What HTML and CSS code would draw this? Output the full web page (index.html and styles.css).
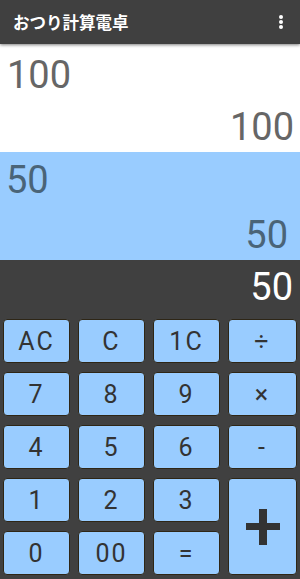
FILE: index.html
```html
<!DOCTYPE html>
<html>
  <head>
    <meta charset="utf-8">
    <link rel="stylesheet" href="styles.css">
  </head>
  <body>
    <div class="appbar">
      <span class="title">おつり計算電卓</span>
      <span class="menu">
        <svg width="6" height="16" viewBox="0 0 6 16">
          <circle cx="3" cy="3" r="2" fill="#fff" />
          <circle cx="3" cy="8" r="2" fill="#fff" />
          <circle cx="3" cy="13" r="2" fill="#fff" />
        </svg>
      </span>
    </div>
    <div class="panel paid">
      <div class="entry">100</div>
      <div class="value">100</div>
    </div>
    <div class="panel price">
      <div class="entry">50</div>
      <div class="value">50</div>
    </div>
    <div class="result">50</div>
    <div class="keypad">
      <button class="key">AC</button>
      <button class="key">C</button>
      <button class="key">1C</button>
      <button class="key">÷</button>
      <button class="key">7</button>
      <button class="key">8</button>
      <button class="key">9</button>
      <button class="key">×</button>
      <button class="key">4</button>
      <button class="key">5</button>
      <button class="key">6</button>
      <button class="key">-</button>
      <button class="key">1</button>
      <button class="key">2</button>
      <button class="key">3</button>
      <button class="key plus">
        <svg width="34" height="36" viewBox="0 0 34 36">
          <rect x="0" y="14" width="34" height="7" fill="#333" />
          <rect x="13" y="0" width="8" height="36" fill="#333" />
        </svg>
      </button>
      <button class="key">0</button>
      <button class="key">00</button>
      <button class="key">=</button>
    </div>
  </body>
</html>
```

FILE: styles.css
```css
html,
body {
  margin: 0;
  padding: 0;
  height: 100%;
  background: #404040;
  font-family: Roboto, "Noto Sans", sans-serif;
}

.appbar {
  display: flex;
  align-items: center;
  justify-content: space-between;
  height: 44px;
  padding: 0 13px;
  background: #404040;
  box-shadow: 0 1px 3px rgba(0, 0, 0, 0.5);
  position: relative;
  z-index: 1;
}

.title {
  color: #fff;
  font-size: 16.5px;
  font-weight: bold;
  font-family: "Noto Sans CJK JP", sans-serif;
}

.menu {
  display: flex;
  margin-right: 3px;
}

.panel {
  display: flex;
  flex-direction: column;
  justify-content: space-between;
  height: 108px;
  box-sizing: border-box;
  font-size: 38px;
  line-height: 1;
}

.paid {
  background: #fff;
  color: #666;
  padding: 12px 6px 6px 7px;
}

.price {
  background: #99ccff;
  color: #4a6478;
  padding: 9px 12px 6px 6px;
}

.entry {
  text-align: left;
}

.value {
  text-align: right;
}

.result {
  height: 52px;
  box-sizing: border-box;
  padding: 8px 7px 0 0;
  text-align: right;
  color: #fff;
  font-size: 38px;
  line-height: 1;
}

.keypad {
  display: grid;
  grid-template-columns: 67px 67px 67px 69px;
  grid-template-rows: repeat(5, 44px);
  column-gap: 8px;
  row-gap: 9px;
  padding: 7px 3px 6px 3px;
}

.key {
  margin: 0;
  padding: 0;
  background: #99ccff;
  border: 1px solid #2e2616;
  border-radius: 4px;
  color: #333;
  font-family: Roboto, sans-serif;
  font-size: 25px;
  letter-spacing: 2px;
}

.plus {
  grid-column: 4;
  grid-row: 4 / span 2;
  display: flex;
  align-items: center;
  justify-content: center;
}
```
